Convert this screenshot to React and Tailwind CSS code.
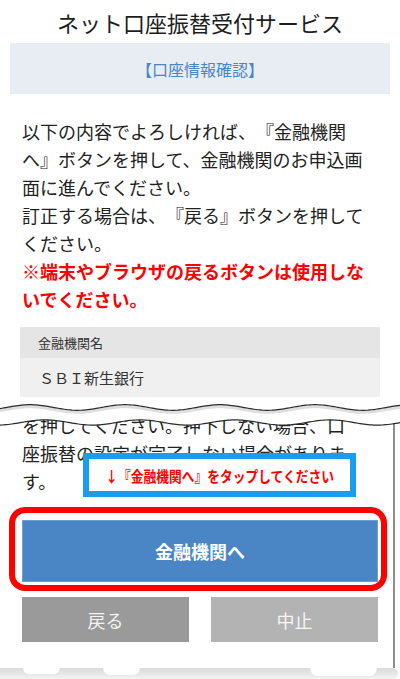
import React from "react";

function wavePath(cy, amp, period, phase, x0, x1) {
  let d = "";
  for (let x = x0; x <= x1; x += 2) {
    const y = cy - amp * Math.cos((2 * Math.PI * (x - phase)) / period);
    d += (x === x0 ? "M" : "L") + x.toFixed(1) + " " + y.toFixed(2) + " ";
  }
  return d;
}

function Waves() {
  const top = wavePath(9.5, 2.8, 95, 30, -4, 404);
  const bottom = wavePath(24.5, 2.6, 95, 45, -4, 404);
  let rev = "";
  for (let x = 404; x >= -4; x -= 2) {
    const y = 24.5 - 2.6 * Math.cos((2 * Math.PI * (x - 45)) / 95);
    rev += "L" + x.toFixed(1) + " " + y.toFixed(2) + " ";
  }
  const fill = top + rev + "Z";
  return (
    <svg className="absolute left-0 top-[398px]" width="400" height="32" viewBox="0 0 400 32">
      <path d={fill} fill="#ffffff" />
      <path d={top} fill="none" stroke="#dedede" strokeWidth="3" transform="translate(0 2)" />
      <path d={top} fill="none" stroke="#2a2a2a" strokeWidth="1.2" />
      <path d={bottom} fill="none" stroke="#2a2a2a" strokeWidth="1.2" />
    </svg>
  );
}

export default function App() {
  return (
    <div className="relative w-[400px] h-[679px] overflow-hidden bg-white font-['Noto_Sans_CJK_JP',sans-serif] text-[#222] [text-spacing-trim:space-all] [font-feature-settings:'palt'_0]">
      {/* top part */}
      <div className="h-[410px] overflow-hidden">
        <div className="h-[43px] flex items-center justify-center text-[22px] leading-none text-[#1e1e1e]">
          ネット口座振替受付サービス
        </div>
        <div className="mx-[10px] h-[51px] bg-[#e8ecf3] flex items-center justify-center text-[16px] leading-none text-[#4a86c6]">
          【口座情報確認】
        </div>
        <div className="mt-[23px] px-[22px] text-[18px] leading-[28px]">
          <p>
            以下の内容でよろしければ、『金融機関へ』ボタンを押して、金融機関のお申込画面に進んでください。
          </p>
          <p>訂正する場合は、『戻る』ボタンを押してください。</p>
          <p className="font-bold text-[#ff0000]">
            ※端末やブラウザの戻るボタンは使用しないでください。
          </p>
        </div>
        <div className="mt-[14px] mx-[20px]">
          <div className="h-[31px] bg-[#e5e5e5] flex items-center pl-[18px] text-[13px] leading-none text-[#333]">
            金融機関名
          </div>
          <div className="h-[39px] bg-[#f0f0f0] flex items-center pl-[19px] text-[15px] leading-none text-[#333]">
            ＳＢＩ新生銀行
          </div>
        </div>
      </div>

      {/* bottom part */}
      <div className="relative">
        <div className="pt-[1px] pl-[22px] w-[362px] text-[18px] leading-[28px]">
          <p>を押してください。押下しない場合、口座振替の設定が完了しない場合があります。</p>
        </div>
        <div className="mt-[25px] mx-[22px] h-[62px] bg-[#4a86c6] border border-[#6e9fd4] flex items-center justify-center text-white text-[18px] font-bold leading-none">
          金融機関へ
        </div>
        <div className="mt-[15px] px-[22px] flex gap-[22px]">
          <div className="flex-1 h-[45px] bg-[#9a9a9a] flex items-center justify-center text-[18px] leading-none text-[#f2f2f2]">
            戻る
          </div>
          <div className="flex-1 h-[45px] bg-[#b3b3b3] flex items-center justify-center text-[18px] leading-none text-[#f5f5f5]">
            中止
          </div>
        </div>

        {/* red highlight ring */}
        <div className="absolute left-[9px] top-[97px] w-[378px] h-[84px] border-[6px] border-[#ff0000] rounded-[16px]"></div>

        {/* blue annotation */}
        <div className="absolute left-[83px] top-[43px] w-[273px] h-[44px] border-[6px] border-[#1a9cf0] bg-white flex items-center justify-center">
          <span className="inline-block scale-x-[0.85] whitespace-nowrap text-[15px] font-bold leading-none text-[#ff0000]">
            ↓『金融機関へ』をタップしてください
          </span>
        </div>
      </div>

      {/* right scroll line */}
      <div className="absolute left-[393px] top-[424px] w-[2px] h-[244px] bg-[#8e8e8e]"></div>

      <Waves />

      {/* bottom shadow band */}
      <div className="absolute left-0 bottom-0 w-[398px] h-[11px] rounded-r-[6px] bg-gradient-to-b from-[#dadada] to-[#f3f3f3]">
        <div className="absolute left-[23px] top-0 w-[37px] h-[6px] rounded-b-full bg-white"></div>
        <div className="absolute left-[103px] top-0 w-[37px] h-[7px] rounded-b-full bg-white"></div>
        <div className="absolute left-[310px] top-0 w-[67px] h-[8px] rounded-b-full bg-white"></div>
      </div>
    </div>
  );
}
